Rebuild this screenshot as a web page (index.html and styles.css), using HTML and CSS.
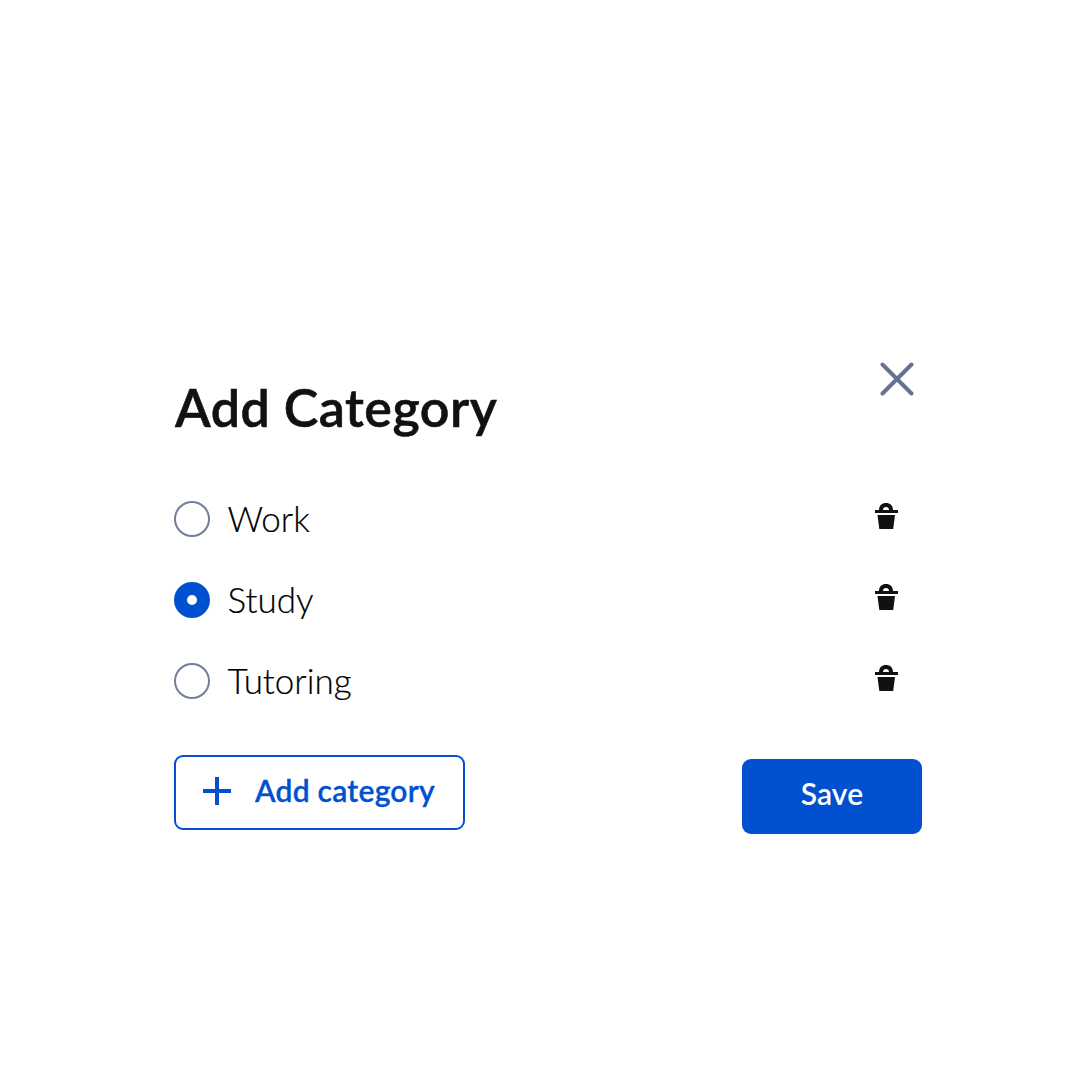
FILE: index.html
```html
<!DOCTYPE html>
<html lang="en">
<head>
<meta charset="utf-8">
<title>Add Category</title>
<link rel="stylesheet" href="styles.css">
</head>
<body>
<main class="dialog">
  <header class="head">
    <h1 class="title">Add Category</h1>
    <button class="close" aria-label="Close">
      <svg width="34" height="34" viewBox="0 0 34 34"><path d="M2.500 2.500 31.500 31.500M31.500 2.500 2.500 31.500" fill="none" stroke="#66738f" stroke-width="4" stroke-linecap="round"/></svg>
    </button>
  </header>
  <ul class="list">
    <li class="row"><span class="radio"></span><span class="label">Work</span>
      <svg class="trash" width="24" height="28" viewBox="0 0 24 28"><path class="fillp" d="M5 8C5 3.500 8 1 12 1s7 2.500 7 7h-4c0-1.800-1.200-3-3-3S9 6.200 9 8z"/><rect class="fillp" x="1" y="8" width="23" height="3"/><path class="fillp" d="M3.500 13h17.500l-1.800 14H5.300z"/></svg></li>
    <li class="row"><span class="radio on"></span><span class="label">Study</span>
      <svg class="trash" width="24" height="28" viewBox="0 0 24 28"><path class="fillp" d="M5 8C5 3.500 8 1 12 1s7 2.500 7 7h-4c0-1.800-1.200-3-3-3S9 6.200 9 8z"/><rect class="fillp" x="1" y="8" width="23" height="3"/><path class="fillp" d="M3.500 13h17.500l-1.800 14H5.300z"/></svg></li>
    <li class="row"><span class="radio"></span><span class="label">Tutoring</span>
      <svg class="trash" width="24" height="28" viewBox="0 0 24 28"><path class="fillp" d="M5 8C5 3.500 8 1 12 1s7 2.500 7 7h-4c0-1.800-1.200-3-3-3S9 6.200 9 8z"/><rect class="fillp" x="1" y="8" width="23" height="3"/><path class="fillp" d="M3.500 13h17.500l-1.800 14H5.300z"/></svg></li>
  </ul>
  <footer class="foot">
    <button class="add">
      <svg width="28" height="28" viewBox="0 0 28 28"><path d="M14 0v28M0 14h28" fill="none" stroke="#0050d0" stroke-width="4"/></svg>
      <span class="add-text">Add category</span>
    </button>
    <button class="save">Save</button>
  </footer>
</main>
</body>
</html>
```
FILE: styles.css
```css
* { box-sizing: border-box; }
html, body { margin: 0; padding: 0; background: #fff; }
body { width: 1080px; height: 1080px; font-family: "Lato", "Liberation Sans", sans-serif; color: #111; }
.dialog { width: 748px; margin-left: 174px; padding-top: 362px; }
.head { display: flex; justify-content: space-between; align-items: flex-start; height: 120px; }
.title { margin: 12px 0 0 1px; font-size: 52px; line-height: 66px; font-weight: 600; letter-spacing: 0.5px; -webkit-text-stroke: 0.6px #111; color: #111; }
.close { margin: 0 8px 0 0; padding: 0; border: 0; background: none; display: block; width: 34px; height: 34px; }
.close svg { display: block; }
.list { list-style: none; margin: 15px 0 0; padding: 0 24px 0 0; display: flex; flex-direction: column; gap: 37px; }
.row { display: flex; align-items: center; height: 44px; }
.radio { width: 36px; height: 36px; border-radius: 50%; border: 2.500px solid #727f9b; flex: none; }
.radio.on { border: 13px solid #0050d0; background: #fff; }
.label { margin-left: 17.500px; padding-bottom: 2px; font-size: 35px; line-height: 42px; font-weight: 300; -webkit-text-stroke: 0.2px #000; color: #000; flex: 1; }
.trash { display: block; flex: none; margin-top: -7px; }
.fillp { fill: #111; }
.foot { display: flex; justify-content: space-between; align-items: flex-start; margin-top: 52px; }
.add { display: flex; align-items: center; gap: 24px; width: 291px; height: 75px; padding: 0 0 4px 27px; border: 2px solid #0050d0; border-radius: 9px; background: #fff; color: #0050d0; font: 600 30px "Lato", sans-serif; letter-spacing: 0.25px; -webkit-text-stroke: 0.3px #0050d0; }
.add svg { display: block; flex: none; }
.add-text { display: block; padding: 0 0 2px; }
.save { width: 180px; height: 75px; margin-top: 4px; padding: 0 0 7px; border: 0; border-radius: 9px; background: #0050d0; color: #fff; font: 600 30px "Lato", sans-serif; letter-spacing: 0.1px; }
```
